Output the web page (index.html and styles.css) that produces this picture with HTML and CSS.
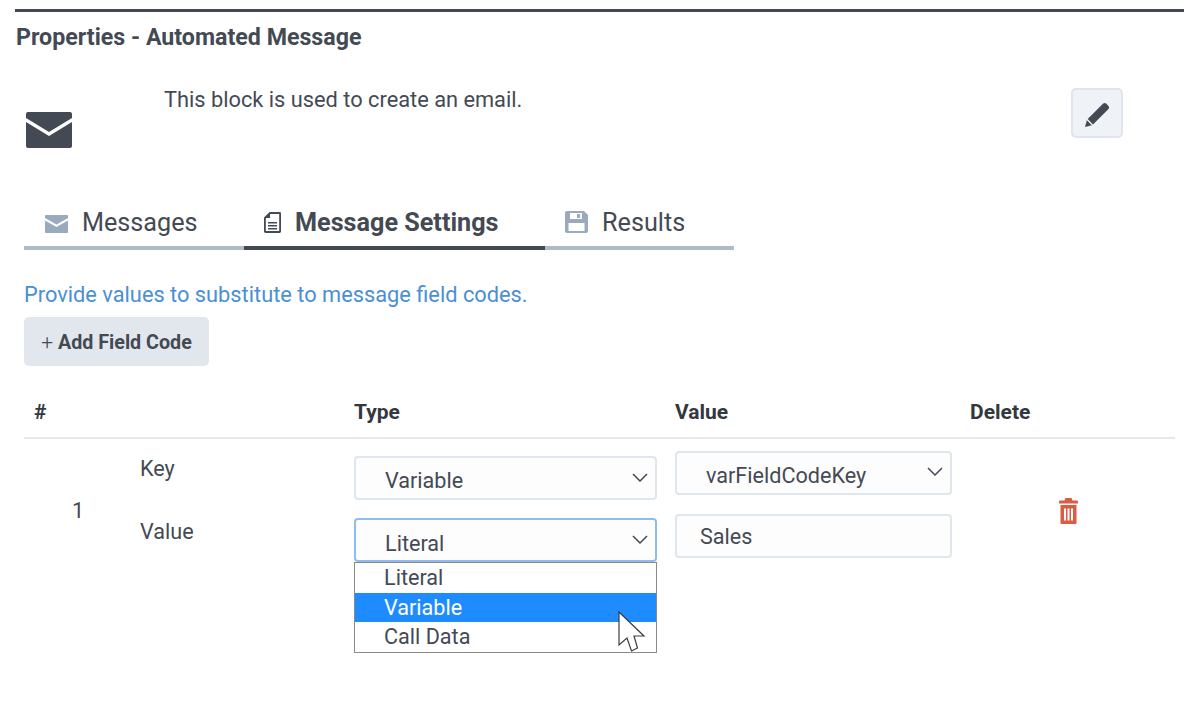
FILE: index.html
```html
<!DOCTYPE html>
<html lang="en">
<head>
<meta charset="utf-8">
<title>Properties - Automated Message</title>
<link rel="stylesheet" href="styles.css">
</head>
<body>
<main class="page">
  <header class="panel-head"><h1>Properties - Automated Message</h1></header>
  <section class="intro">
    <svg class="mail-icon" viewBox="0 0 46 36"><path fill="#444a54" d="M2 0h42a2 2 0 0 1 2 2v4L23 20 0 6V2a2 2 0 0 1 2-2zM0 10l23 14 23-14v24a2 2 0 0 1-2 2H2a2 2 0 0 1-2-2z"/></svg>
    <p class="intro-text">This block is used to create an email.</p>
    <button class="edit-btn" aria-label="Edit">
      <svg viewBox="0 0 30 30" width="30" height="30"><path fill="#444a54" d="M21.2 3.6a2.2 2.2 0 0 1 3 0l2.3 2.3a2.2 2.2 0 0 1 0 3L11 24.400l-5.300-5.300z"/><path fill="#444a54" d="M4.900 20.300l4.900 4.900-6.800 1.900z"/></svg>
    </button>
  </section>
  <nav class="tabs">
    <div class="tab tab-messages">
      <svg class="tab-icon mail-small" width="23" height="18" viewBox="0 0 23 18"><path fill="#9aa9bb" d="M1 0h21a1 1 0 0 1 1 1v2L11.500 9.500 0 3V1a1 1 0 0 1 1-1zM0 5.500l11.500 6.500L23 5.500V17a1 1 0 0 1-1 1H1a1 1 0 0 1-1-1z"/></svg>
      <span>Messages</span>
    </div>
    <div class="tab tab-settings active">
      <svg class="tab-icon" width="17" height="21" viewBox="0 0 17 21"><path fill="none" stroke="#444a54" stroke-width="1.800" d="M6 1h9.600a.5.500 0 0 1 .5.500v18a.5.500 0 0 1-.5.500H1.400a.5.500 0 0 1-.5-.500V6z"/><path fill="#444a54" d="M6 1v5H1zM4 10h9v1.500H4zM4 13h9v1.500H4zM4 16h9v1.500H4z"/></svg>
      <span>Message Settings</span>
    </div>
    <div class="tab tab-results">
      <svg class="tab-icon" width="23" height="22" viewBox="0 0 23 22"><path fill-rule="evenodd" fill="#9aa9bb" d="M2 0h17l4 4v16a2 2 0 0 1-2 2H2a2 2 0 0 1-2-2V2a2 2 0 0 1 2-2zM5 2v6h12V2zM12 3h3v4h-3zM3.500 12v8h16v-8z"/></svg>
      <span>Results</span>
    </div>
  </nav>
  <p class="hint">Provide values to substitute to message field codes.</p>
  <button class="add-btn"><span class="plus">+</span> Add Field Code</button>
  <section class="codes">
    <div class="codes-head">
      <span>#</span><span></span><span>Type</span><span>Value</span><span>Delete</span>
    </div>
    <div class="codes-row">
      <div class="cell-num">1</div>
      <div class="cell-labels"><span>Key</span><span>Value</span></div>
      <div class="cell-type">
        <div class="select">Variable<svg class="chev" viewBox="0 0 16 9"><path d="M1 1l7 7 7-7" fill="none" stroke="#444a54" stroke-width="1.500"/></svg></div>
        <div class="select focus">Literal<svg class="chev" viewBox="0 0 16 9"><path d="M1 1l7 7 7-7" fill="none" stroke="#444a54" stroke-width="1.500"/></svg>
          <ul class="menu">
            <li>Literal</li>
            <li class="hl">Variable</li>
            <li>Call Data</li>
          </ul>
        </div>
      </div>
      <div class="cell-value">
        <div class="select">varFieldCodeKey<svg class="chev" viewBox="0 0 16 9"><path d="M1 1l7 7 7-7" fill="none" stroke="#444a54" stroke-width="1.500"/></svg></div>
        <div class="input">Sales</div>
      </div>
      <div class="cell-del">
        <svg width="19" height="26" viewBox="0 0 19 26"><path fill="#dd5a43" fill-rule="evenodd" d="M6.500 0h6l1 2.500H18a1 1 0 0 1 1 1V5.500H0V3.500a1 1 0 0 1 1-1h4.500zM1.500 7h16v18a1 1 0 0 1-1 1h-14a1 1 0 0 1-1-1zM5 10.500v12h2v-12zM8.500 10.500v12h2v-12zM12 10.500v12h2v-12z"/></svg>
      </div>
    </div>
  </section>
  <svg class="cursor" width="28" height="42" viewBox="0 0 28 42"><path fill="#fff" stroke="#3c3c3c" stroke-width="1.200" d="M1 1L26 25H16L19.500 37L13.500 40L9 27L1 34z"/></svg>
</main>
</body>
</html>
```
FILE: styles.css
```css
* { box-sizing: border-box; }
html, body { margin: 0; padding: 0; background: #fff; }
body {
  font-family: Roboto, "Liberation Sans", sans-serif;
  color: #444a54;
  width: 1200px;
  height: 718px;
  overflow: hidden;
}
.page { position: relative; padding: 9px 16px 0 15px; height: 718px; }
.panel-head { border-top: 3px solid #444a52; height: 43px; }
h1 {
  margin: 0;
  padding: 11px 0 0 1px;
  font-size: 23.200px;
  line-height: 28px;
  font-weight: 700;
}
.intro {
  display: flex;
  align-items: flex-start;
  height: 150px;
  padding-left: 11px;
}
.mail-icon { width: 46px; height: 36px; margin-top: 60px; flex: none; }
.intro-text {
  margin: 0;
  padding: 35px 0 0 92px;
  font-size: 21.800px;
  line-height: 26px;
  flex: 1;
}
.edit-btn {
  width: 52px;
  height: 50px;
  margin: 36px 61px 0 0;
  padding: 3px 0 0;
  background: #eff2f6;
  border: 2px solid #dfe5ed;
  border-radius: 5px;
  display: flex;
  align-items: center;
  justify-content: center;
}
.tabs { display: flex; margin-left: 9px; height: 48px; }
.tab {
  display: flex;
  align-items: center;
  height: 48px;
  padding-bottom: 4px;
  border-bottom: 4px solid #aebbc8;
  font-size: 25.200px;
  color: #444a54;
}
.tab-icon { flex: none; }
.mail-small { margin-top: 4px; }
.tab-messages { width: 220px; padding-left: 21px; gap: 14px; }
.tab-settings { width: 301px; padding-left: 20px; gap: 14px; }
.tab-results { width: 189px; padding-left: 20px; gap: 14px; }
.tab.active { border-bottom-color: #444a52; font-weight: 700; }
.hint {
  margin: 32px 0 0 9px;
  color: #4a8fd3;
  font-size: 21.800px;
  line-height: 26px;
}
.add-btn {
  display: block;
  margin: 9px 0 0 9px;
  width: 185px;
  height: 49px;
  padding: 0;
  border: 0;
  border-radius: 5px;
  background: #e2e7ee;
  color: #444a54;
  font-family: inherit;
  font-size: 19.700px;
  font-weight: 700;
  text-align: center;
}
.plus { font-weight: 300; font-size: 21px; }
.codes { margin: 26px 0 0 9px; width: 1151px; font-size: 21.600px; }
.codes-head, .codes-row {
  display: grid;
  grid-template-columns: 116px 214px 321px 295px 1fr;
}
.codes-head {
  height: 47px;
  padding-top: 8px;
  border-bottom: 2px solid #e4e9f0;
  font-weight: 700;
  font-size: 21px;
  color: #33383f;
  line-height: 24px;
}
.codes-head span:first-child { padding-left: 10px; }
.codes-row { height: 130px; }
.cell-num { padding: 60px 0 0 48px; line-height: 24px; }
.cell-labels { display: flex; flex-direction: column; gap: 39px; padding-top: 18px; line-height: 24px; }
.cell-type { display: flex; flex-direction: column; gap: 18px; padding-top: 17px; }
.cell-value { display: flex; flex-direction: column; gap: 19px; padding-top: 12px; }
.select, .input {
  position: relative;
  height: 44px;
  background: #fdfdfe;
  border: 2px solid #e0e6ee;
  border-radius: 4px;
  line-height: 46px;
}
.cell-type .select { width: 303px; padding-left: 29px; }
.cell-value .select { width: 277px; padding-left: 29px; }
.input { width: 277px; padding-left: 23px; line-height: 42px; }
.select.focus { border-color: #8fbcec; line-height: 48px; }
.chev { position: absolute; right: 7px; top: 15px; width: 16px; height: 9px; }
.cell-value .chev { top: 14px; }
.menu {
  position: absolute;
  left: -2px;
  top: 42px;
  width: 303px;
  margin: 0;
  padding: 0;
  list-style: none;
  background: #fff;
  border: 1px solid #8a8a8a;
  line-height: 29.600px;
  z-index: 2;
}
.menu li { padding-left: 29px; height: 29.600px; }
.menu li.hl { background: #1e8cff; color: #fff; }
.cell-del { padding: 59px 0 0 89px; }
.cursor { position: absolute; left: 618px; top: 611px; z-index: 3; }
```
